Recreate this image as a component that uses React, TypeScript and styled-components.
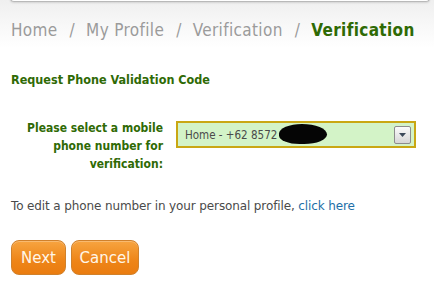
import styled, { createGlobalStyle } from "styled-components";

const Global = createGlobalStyle`
  html, body {
    margin: 0;
    padding: 0;
    background: #fff;
  }
  body {
    font-family: "DejaVu Sans", Verdana, sans-serif;
  }
`;

const Page = styled.div`
  width: 434px;
  height: 283px;
  overflow: hidden;
  background: linear-gradient(#efefef 0px, #f6f6f6 20px, #fff 48px);
  position: relative;
`;

const TopEdge = styled.div`
  height: 3px;
  margin: -2px 4px 0 10px;
  border: 1px solid #b9b9b9;
  border-top: none;
  border-radius: 0 0 5px 5px;
  background: #fff;
  box-shadow: 0 1px 2px rgba(0, 0, 0, 0.12);
`;

const Crumbs = styled.div`
  display: flex;
  align-items: baseline;
  padding: 18px 0 0 11px;
  font-size: 17px;
  color: #9b9b9b;
  font-family: "DejaVu Sans Condensed", "DejaVu Sans", sans-serif;
  letter-spacing: 0.35px;
`;

const Crumb = styled.span<{ $current?: boolean }>`
  color: ${p => (p.$current ? "#2f6a05" : "#9b9b9b")};
  font-weight: ${p => (p.$current ? "bold" : "normal")};
`;

const Sep = styled.span`
  margin: 0 11px 0 12px;
`;

const Title = styled.h2`
  margin: 32px 0 0 11px;
  font-size: 12.5px;
  font-weight: bold;
  color: #2f6a05;
  font-family: "DejaVu Sans Condensed", "DejaVu Sans", sans-serif;
`;

const FormRow = styled.div`
  display: flex;
  align-items: flex-start;
  margin-top: 34px;
  gap: 13px;
`;

const Label = styled.label`
  width: 163px;
  margin-top: -2px;
  text-align: right;
  font-size: 12px;
  line-height: 18px;
  font-weight: bold;
  color: #2f6a05;
  font-family: "DejaVu Sans Condensed", "DejaVu Sans", sans-serif;
`;

const Select = styled.div`
  position: relative;
  width: 229px;
  height: 23px;
  border: 2px solid #c9a713;
  background: #d3f3c7;
  display: flex;
  align-items: center;
  padding-left: 7px;
  font-size: 11.5px;
  color: #4a4a4a;
  font-family: "DejaVu Sans Condensed", "DejaVu Sans", sans-serif;
`;

const Redact = styled.span`
  position: absolute;
  left: 101px;
  top: 1px;
  width: 48px;
  height: 20px;
  background: #050505;
  border-radius: 50% 55% 50% 45%;
`;

const Arrow = styled.span`
  position: absolute;
  right: 3px;
  top: 3px;
  width: 15px;
  height: 16px;
  border: 1px solid #8c8c8c;
  border-radius: 2px;
  background: linear-gradient(#fbfbfb, #d6d6d6);
  display: flex;
  align-items: center;
  justify-content: center;
`;

const Note = styled.p`
  margin: 26px 0 0 11px;
  font-size: 12px;
  letter-spacing: -0.12px;
  color: #4a4a4a;
  font-family: "DejaVu Sans", sans-serif;
`;

const Link = styled.a`
  color: #1d6fa8;
  text-decoration: none;
`;

const Buttons = styled.div`
  display: flex;
  gap: 5px;
  margin: 27px 0 0 11px;
`;

const Button = styled.button<{ $w: number }>`
  width: ${p => p.$w}px;
  height: 35px;
  border: 1px solid #d0812c;
  border-radius: 8px;
  background: linear-gradient(#f7a440, #ee8518 60%, #ea7c10);
  color: #fff6e8;
  font-size: 15px;
  font-family: "DejaVu Sans", sans-serif;
  box-shadow: inset 0 1px 0 rgba(255, 255, 255, 0.25);
  padding: 0;
`;

export default function App() {
  return (
    <>
      <Global />
      <Page>
        <TopEdge />
        <Crumbs>
          <Crumb>Home</Crumb>
          <Sep>/</Sep>
          <Crumb>My Profile</Crumb>
          <Sep>/</Sep>
          <Crumb>Verification</Crumb>
          <Sep>/</Sep>
          <Crumb $current>Verification</Crumb>
        </Crumbs>
        <Title>Request Phone Validation Code</Title>
        <FormRow>
          <Label>
            Please select a mobile
            <br />
            phone number for
            <br />
            verification:
          </Label>
          <Select>
            Home - +62 8572
            <Redact />
            <Arrow>
              <svg width="7" height="4" viewBox="0 0 7 4">
                <path d="M0 0 H7 L3.5 4 Z" fill="#3c4a5a" />
              </svg>
            </Arrow>
          </Select>
        </FormRow>
        <Note>
          To edit a phone number in your personal profile, <Link href="#">click here</Link>
        </Note>
        <Buttons>
          <Button $w={55}>Next</Button>
          <Button $w={68}>Cancel</Button>
        </Buttons>
      </Page>
    </>
  );
}
